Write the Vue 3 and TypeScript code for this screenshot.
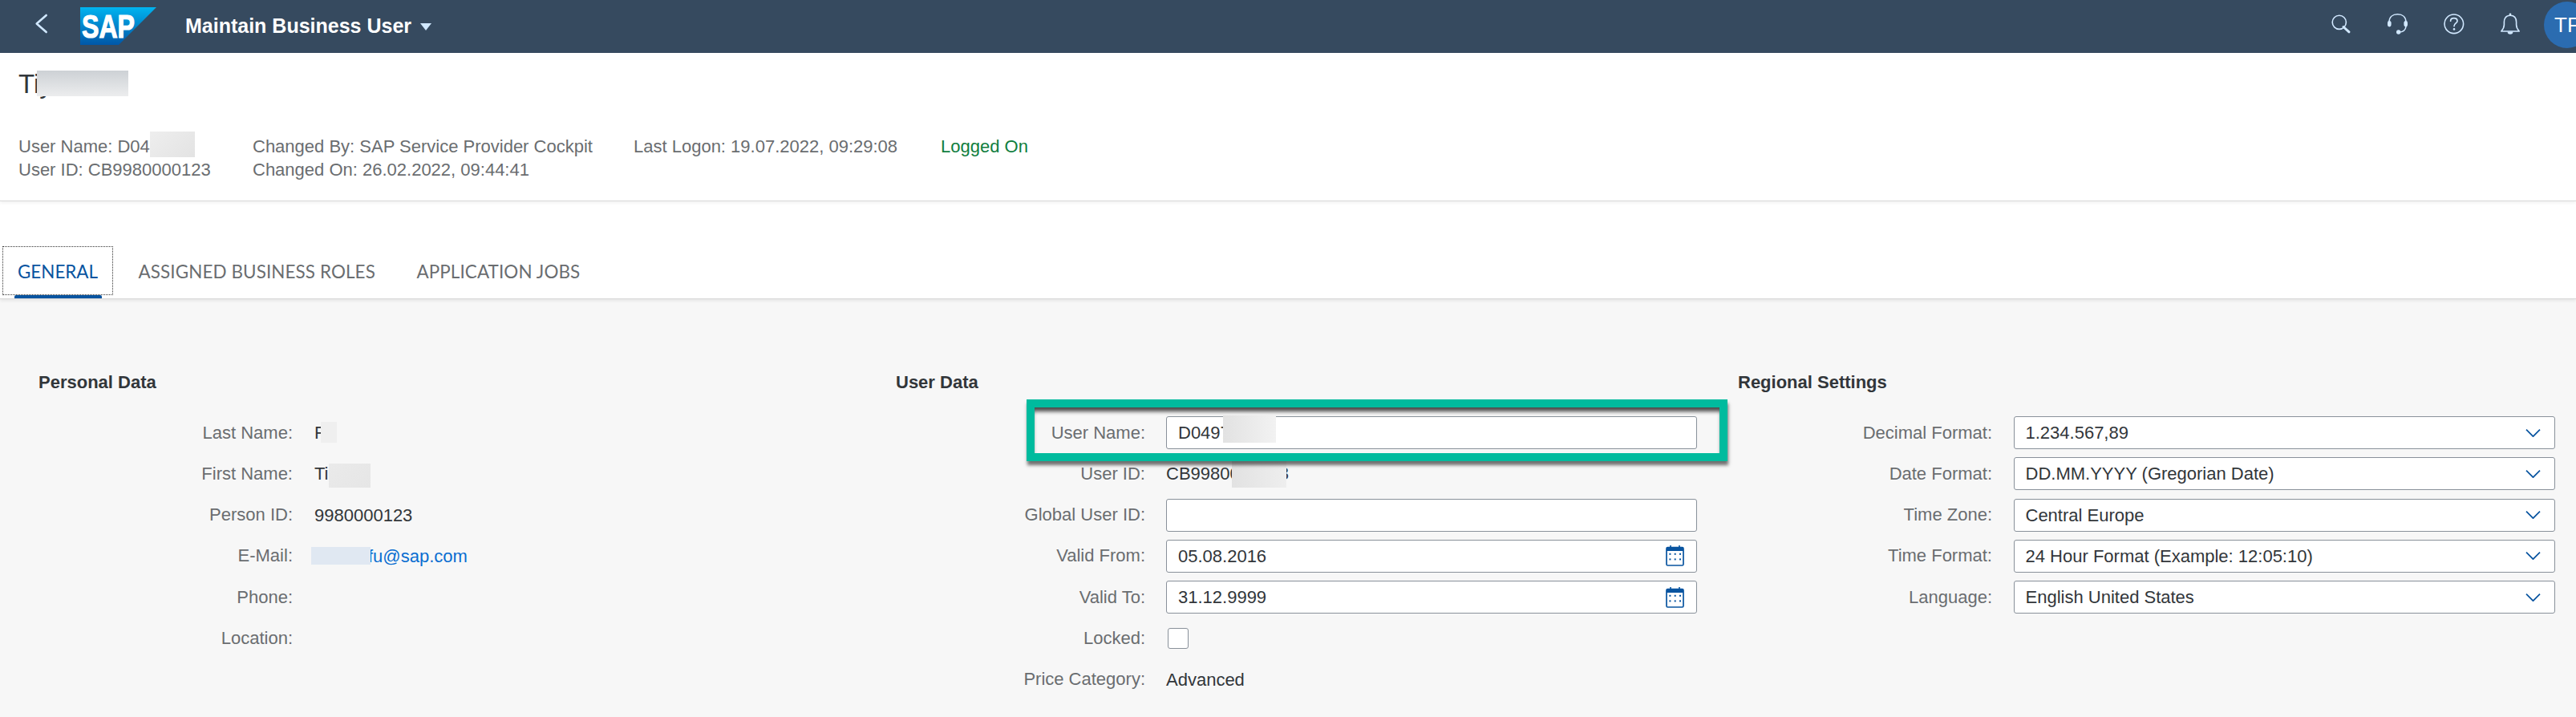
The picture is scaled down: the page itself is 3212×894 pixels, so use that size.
<script setup lang="ts">
const tabs: { label: string; active?: boolean }[] = [
  { label: 'GENERAL', active: true },
  { label: 'ASSIGNED BUSINESS ROLES' },
  { label: 'APPLICATION JOBS' },
]
const regional: { label: string; value: string }[] = [
  { label: 'Decimal Format:', value: '1.234.567,89' },
  { label: 'Date Format:', value: 'DD.MM.YYYY (Gregorian Date)' },
  { label: 'Time Zone:', value: 'Central Europe' },
  { label: 'Time Format:', value: '24 Hour Format (Example: 12:05:10)' },
  { label: 'Language:', value: 'English United States' },
]
const dates: { label: string; value: string }[] = [
  { label: 'Valid From:', value: '05.08.2016' },
  { label: 'Valid To:', value: '31.12.9999' },
]
</script>

<template>
  <div class="app">
    <header class="shell">
      <div class="back">
        <svg width="100" height="66" viewBox="0 0 100 66">
          <path d="M57.7 19 45.7 29.5 57.7 40" fill="none" stroke="#d1e8ff" stroke-width="2.6" stroke-linecap="round" stroke-linejoin="round" />
        </svg>
      </div>
      <svg class="logo" width="95" height="47" viewBox="0 0 95 47">
        <defs>
          <linearGradient id="sapg" x1="0" y1="0" x2="0" y2="1">
            <stop offset="0" stop-color="#00b4f0" />
            <stop offset="1" stop-color="#0057a8" />
          </linearGradient>
        </defs>
        <path d="M0 0H95L48 47H0Z" fill="url(#sapg)" />
        <text x="2" y="38" textLength="66" lengthAdjust="spacingAndGlyphs" class="logo-text">SAP</text>
      </svg>
      <div class="app-title">Maintain Business User</div>
      <span class="caret"></span>
      <div class="shell-actions">
        <svg class="ico" width="70" height="66" viewBox="0 0 70 66" fill="none" stroke="#d1e8ff">
          <circle cx="32.8" cy="27.8" r="8.6" stroke-width="1.6" />
          <path d="M38 33.5 45 39.8" stroke-width="3" stroke-linecap="round" />
        </svg>
        <svg class="ico" width="70" height="66" viewBox="0 0 70 66" fill="none" stroke="#d1e8ff">
          <path d="M25 28C25 21 29.5 17.8 35.5 17.8S46 21 46 28" stroke-width="1.6" />
          <rect x="23" y="26" width="4.6" height="7.4" rx="2.3" fill="#d1e8ff" stroke="none" />
          <rect x="43.4" y="26" width="4.6" height="7.4" rx="2.3" fill="#d1e8ff" stroke="none" />
          <path d="M46 33C45.5 37.5 43 40 37 40" stroke-width="1.6" />
          <circle cx="36.7" cy="40" r="2.7" fill="#d1e8ff" stroke="none" />
        </svg>
        <svg class="ico" width="70" height="66" viewBox="0 0 70 66" fill="none" stroke="#d1e8ff">
          <circle cx="35.8" cy="29.8" r="11.8" stroke-width="1.6" />
          <path d="M31.6 26.2C31.6 23.8 33.4 22.6 35.8 22.6S40 24 40 26.2C40 29 36 29 36 32.6" stroke-width="1.7" stroke-linecap="round" />
          <circle cx="36" cy="36.4" r="1.3" fill="#d1e8ff" stroke="none" />
        </svg>
        <svg class="ico" width="70" height="66" viewBox="0 0 70 66" fill="none" stroke="#d1e8ff">
          <path d="M36 19.2C30.5 19.2 28.4 23.2 28.4 27.5V31C28.4 34.5 26.6 37 24.8 39H47.2C45.4 37 43.6 34.5 43.6 31V27.5C43.6 23.2 41.5 19.2 36 19.2Z" stroke-width="1.6" stroke-linejoin="round" />
          <circle cx="36" cy="18" r="1.4" fill="#d1e8ff" stroke="none" />
          <path d="M32.6 39.5A3.4 3.2 0 0 0 39.4 39.5Z" fill="#d1e8ff" stroke="none" />
        </svg>
        <div class="avatar">TF</div>
      </div>
    </header>

    <section class="object-head">
      <h1 class="object-name"><span class="mv">Tiy<i class="mask m-name"></i></span></h1>
      <div class="meta">
        <div>
          <div>User Name: <span class="mv">D04<i class="mask m-head"></i></span></div>
          <div>User ID: CB9980000123</div>
        </div>
        <div>
          <div>Changed By: SAP Service Provider Cockpit</div>
          <div>Changed On: 26.02.2022, 09:44:41</div>
        </div>
        <div>Last Logon: 19.07.2022, 09:29:08</div>
        <div class="status">Logged On</div>
      </div>
    </section>

    <nav class="tabbar">
      <div v-for="t in tabs" :key="t.label" class="tab" :class="{ active: t.active }">{{ t.label }}</div>
    </nav>

    <main class="content">
      <section class="col col-personal">
        <h2 class="sec">Personal Data</h2>
        <div class="form">
          <div class="row">
            <label class="lbl">Last Name:</label>
            <span class="val"><span class="mv">F<i class="mask m-last"></i></span></span>
          </div>
          <div class="row">
            <label class="lbl">First Name:</label>
            <span class="val"><span class="mv">Ti<i class="mask m-first"></i></span></span>
          </div>
          <div class="row">
            <label class="lbl">Person ID:</label>
            <span class="val">9980000123</span>
          </div>
          <div class="row">
            <label class="lbl">E-Mail:</label>
            <span class="val"><a class="mv link">fu@sap.com<i class="mask m-mail"></i></a></span>
          </div>
          <div class="row"><label class="lbl">Phone:</label></div>
          <div class="row"><label class="lbl">Location:</label></div>
        </div>
      </section>

      <section class="col col-user">
        <h2 class="sec">User Data</h2>
        <div class="form">
          <div class="row hl">
            <label class="lbl">User Name:</label>
            <div class="field"><span class="mv">D0497<i class="mask m-uname"></i></span></div>
            <div class="annot"></div>
          </div>
          <div class="row">
            <label class="lbl">User ID:</label>
            <span class="val"><span class="mv">CB9980000123<i class="mask m-uid"></i></span></span>
          </div>
          <div class="row">
            <label class="lbl">Global User ID:</label>
            <div class="field"></div>
          </div>
          <div v-for="d in dates" :key="d.label" class="row">
            <label class="lbl">{{ d.label }}</label>
            <div class="field">
              <span>{{ d.value }}</span>
              <svg class="cal" width="23" height="26" viewBox="0 0 23 26">
                <path d="M6 0V3M17 0V3" stroke="#0854a0" stroke-width="1.6" />
                <rect x="1" y="2.5" width="21" height="22.5" rx="1.5" fill="#fff" stroke="#0854a0" stroke-width="1.7" />
                <rect x="1" y="2.5" width="21" height="4.5" fill="#0854a0" />
                <g fill="#0854a0">
                  <rect x="4.4" y="9.8" width="2" height="2" />
                  <rect x="10.7" y="9.8" width="2" height="2" />
                  <rect x="17" y="9.8" width="2" height="2" />
                  <rect x="4.4" y="16.4" width="2" height="2" />
                  <rect x="10.7" y="16.4" width="2" height="2" />
                  <rect x="17" y="16.4" width="2" height="2" />
                </g>
              </svg>
            </div>
          </div>
          <div class="row">
            <label class="lbl">Locked:</label>
            <span class="check"></span>
          </div>
          <div class="row">
            <label class="lbl">Price Category:</label>
            <span class="val">Advanced</span>
          </div>
        </div>
      </section>

      <section class="col col-regional">
        <h2 class="sec">Regional Settings</h2>
        <div class="form">
          <div v-for="r in regional" :key="r.label" class="row">
            <label class="lbl">{{ r.label }}</label>
            <div class="field">
              <span>{{ r.value }}</span>
              <svg class="chev" width="19" height="10" viewBox="0 0 19 10">
                <path d="M1 .6 9.5 9.2 18 .6" fill="none" stroke="#0854a0" stroke-width="1.7" />
              </svg>
            </div>
          </div>
        </div>
      </section>
    </main>
  </div>
</template>

<style>
html, body { margin: 0; padding: 0; background: #f7f7f7; }
</style>

<style scoped>
.app {
  width: 3212px;
  height: 894px;
  overflow: hidden;
  display: flex;
  flex-direction: column;
  font-family: "Liberation Sans", Arial, sans-serif;
  font-size: 22px;
  color: #32363a;
  background: #f7f7f7;
}

.shell {
  flex: none;
  height: 66px;
  display: flex;
  align-items: center;
  background: #364a5f;
  color: #fff;
}
.back { width: 100px; height: 66px; }
.back svg, .ico { display: block; }
.logo { flex: none; display: block; margin-bottom: 1px; }
.logo-text {
  font-family: "Liberation Sans", Arial, sans-serif;
  font-weight: 700;
  font-size: 40px;
  fill: #fff;
  stroke: #fff;
  stroke-width: 1.2;
}
.app-title { margin-left: 36px; font-size: 25px; font-weight: 700; white-space: nowrap; margin-bottom: 1px; }
.caret {
  margin-left: 11px;
  width: 0;
  height: 0;
  border-left: 7px solid transparent;
  border-right: 7px solid transparent;
  border-top: 9px solid #d1e8ff;
}
.shell-actions { margin-left: auto; display: flex; align-items: center; flex: none; }
.avatar {
  flex: none;
  width: 58px;
  height: 58px;
  margin-left: 8px;
  margin-right: -18px;
  margin-bottom: 4px;
  border-radius: 50%;
  background: #2b6cb0;
  color: #fff;
  font-size: 26px;
  line-height: 58px;
  text-align: center;
}

.object-head {
  flex: none;
  height: 185px;
  box-sizing: border-box;
  padding: 18px 0 0 23px;
  background: #fff;
  border-bottom: 1px solid #d9d9d9;
  box-shadow: 0 2px 4px rgba(0, 0, 0, 0.06);
  position: relative;
  z-index: 1;
}
.object-name { margin: 0; font-size: 33px; font-weight: 400; line-height: 42px; }
.meta {
  margin-top: 42px;
  display: grid;
  grid-template-columns: 292px 475px 383px auto;
  line-height: 29px;
  color: #6a6d70;
  white-space: nowrap;
}
.status { color: #107e3e; }

.tabbar {
  flex: none;
  display: flex;
  gap: 11.5px;
  padding: 56px 0 4px 3px;
  background: #fff;
  border-bottom: 1px solid #d9d9d9;
  box-shadow: 0 2px 4px rgba(0, 0, 0, 0.08);
  position: relative;
}
.tab {
  position: relative;
  height: 61px;
  box-sizing: border-box;
  padding: 2px 19px 0;
  border: 1px solid transparent;
  display: flex;
  align-items: center;
  font-family: Lato, "Liberation Sans", sans-serif;
  font-size: 22.4px;
  letter-spacing: 0.12px;
  color: #6a6d70;
  white-space: nowrap;
}
.tab.active {
  width: 138px;
  padding: 2px 0 0;
  justify-content: center;
  letter-spacing: 0;
  color: #0854a0;
  border: 1px dotted #333;
}
.tab.active::after {
  content: "";
  position: absolute;
  left: 14px;
  right: 13px;
  bottom: -5px;
  height: 4px;
  background: #0854a0;
  border-radius: 2px 2px 0 0;
}

.content {
  flex: 1;
  display: grid;
  grid-template-columns: 1069px 1050px 1fr;
  padding: 89.5px 0 0 48px;
  background: #f7f7f7;
}
.sec { margin: 0 0 28.5px; font-size: 22px; font-weight: 700; line-height: 28px; color: #32363a; }
.form { display: flex; flex-direction: column; gap: 10.25px; }
.row { display: flex; align-items: center; height: 41px; position: relative; }
.lbl { flex: none; text-align: right; color: #6a6d70; white-space: nowrap; }
.col-personal .lbl { width: 317px; margin-right: 27px; }
.col-user .lbl { width: 311px; margin-right: 26px; }
.col-regional .lbl { width: 317px; margin-right: 26.5px; }
.val { line-height: 29px; white-space: nowrap; }

.field {
  flex: none;
  height: 41px;
  box-sizing: border-box;
  display: flex;
  align-items: center;
  justify-content: space-between;
  padding: 0 15px 0 14px;
  background: #fff;
  border: 1px solid #89919a;
  border-radius: 3px;
  line-height: 29px;
  white-space: nowrap;
}
.col-user .field { width: 662px; }
.col-regional .field { width: 675px; padding-right: 17px; }
.cal, .chev { display: block; flex: none; }
.check {
  flex: none;
  width: 26px;
  height: 26px;
  box-sizing: border-box;
  margin-left: 2px;
  background: #fff;
  border: 1px solid #89919a;
  border-radius: 3px;
}
.link { color: #0a6ed1; padding-left: 67px; }

.mv { position: relative; display: inline-block; }
.mask { position: absolute; display: block; z-index: 1; }
.m-name { left: 23px; top: 4px; width: 114px; height: 32px; background: linear-gradient(180deg, #cdd1d5, #ecedee); }
.m-head { left: 100%; top: -4px; width: 56px; height: 32px; background: linear-gradient(135deg, #eeeeee, #e3e3e3); }
.m-last { left: 8px; top: 1px; width: 20px; height: 26px; background: #efefef; }
.m-first { left: 18px; top: 2px; width: 52px; height: 30px; background: linear-gradient(135deg, #eaeaea, #e6e6e6); }
.m-mail { left: -4px; top: 3px; width: 74px; height: 22px; background: #e0e8f2; }
.m-uname { left: 56px; top: -7px; width: 66px; height: 34px; background: linear-gradient(90deg, #e2e2e2, #f2f2f2); }
.m-uid { left: 82px; top: -3px; width: 68px; height: 35px; background: linear-gradient(90deg, #e2e2e2, #eeeeee); }

.annot {
  position: absolute;
  left: 163px;
  top: -21px;
  width: 874px;
  height: 77px;
  box-sizing: border-box;
  border: 10px solid #00bb9e;
  z-index: 2;
  pointer-events: none;
  box-shadow: 1px 5px 4px rgba(0, 0, 0, 0.55), inset 0 7px 5px -2px rgba(0, 0, 0, 0.7);
}
</style>
